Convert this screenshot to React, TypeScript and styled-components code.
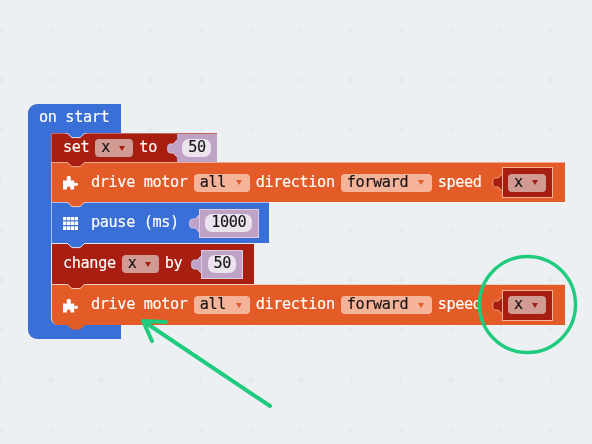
import React from "react";
import styled, { createGlobalStyle } from "styled-components";

const BLUE = "#3b6fd8";
const RED = "#a81e10";
const ORANGE = "#e35b26";
const LILAC = "#bfa3c6";
const GREEN = "#1fcb7e";

const Global = createGlobalStyle`
  html, body { margin: 0; padding: 0; background: #ecf0f2; }
  #root { width: 592px; height: 444px; overflow: hidden; }
`;

const Page = styled.div`
  position: relative;
  width: 592px;
  height: 444px;
  overflow: hidden;
  box-sizing: border-box;
  padding: 104px 0 0 28px;
  background: #ecf0f2;
  font-family: "DejaVu Sans Mono", "Liberation Mono", monospace;
  font-size: 15.2px;
  letter-spacing: -0.36px;
  -webkit-text-stroke: 0.15px currentColor;
  filter: blur(0.3px);
`;

const Layer = styled.svg`
  position: absolute;
  left: 0;
  top: 0;
  pointer-events: none;
`;

const GridLayer = styled(Layer)`
  z-index: 0;
`;

const MarkLayer = styled(Layer)`
  z-index: 5;
`;

const Loop = styled.section`
  position: relative;
  z-index: 1;
  display: flex;
  flex-direction: column;
  width: max-content;
`;

const LoopHead = styled.div`
  box-sizing: border-box;
  width: 93px;
  height: 29px;
  padding: 0 0 2px 11px;
  display: flex;
  align-items: center;
  background: ${BLUE};
  border-radius: 9px 0 0 0;
  color: #fff;
`;

const LoopBody = styled.div`
  display: flex;
`;

const LoopArm = styled.div`
  width: 23px;
  background: ${BLUE};
`;

const LoopFoot = styled.div`
  width: 93px;
  height: 14px;
  background: ${BLUE};
  border-radius: 0 0 0 9px;
`;

const Stack = styled.div`
  display: flex;
  flex-direction: column;
  align-items: flex-start;
`;

const CornerBacking = styled.div`
  background: ${BLUE};
`;

const Block = styled.div<{ $bg: string; $h: number; $edge: string; $pr?: number; $round?: boolean }>`
  position: relative;
  box-sizing: border-box;
  height: ${(p) => p.$h}px;
  padding: 0 ${(p) => p.$pr ?? 12}px 0 11px;
  display: flex;
  align-items: center;
  gap: 6px;
  background: ${(p) => p.$bg};
  border-top: 1px solid ${(p) => p.$edge};
  border-left: 1px solid ${(p) => p.$edge};
  border-radius: ${(p) => (p.$round ? "0 0 0 7px" : "0")};
  color: #fff;
`;

const Notch = styled.svg<{ $below?: boolean }>`
  position: absolute;
  left: 13px;
  top: ${(p) => (p.$below ? "100%" : "-1px")};
  z-index: 2;
`;

const Label = styled.span`
  white-space: pre;
  line-height: 18px;
  padding-bottom: 2px;
`;

const IconSlot = styled.svg`
  flex: none;
  margin-right: 7px;
`;

const Dropdown = styled.span<{ $w: number; $bg: string; $arrow: string }>`
  box-sizing: border-box;
  width: ${(p) => p.$w}px;
  height: 18px;
  padding: 0 8px 2px 6px;
  display: flex;
  align-items: center;
  justify-content: space-between;
  background: ${(p) => p.$bg};
  border-radius: 4px;
  color: #151515;
  --arrow: ${(p) => p.$arrow};
`;

const Caret = styled.i`
  width: 0;
  height: 0;
  margin-top: 2px;
  border-left: 3px solid transparent;
  border-right: 3px solid transparent;
  border-top: 5px solid var(--arrow);
`;

const Value = styled.span<{ $left: number }>`
  display: flex;
  align-items: center;
  margin-left: ${(p) => p.$left}px;
`;

const Tab = styled.svg`
  flex: none;
  display: block;
`;

const ValueBody = styled.span<{ $w: number; $h: number; $bg: string; $line?: string }>`
  box-sizing: border-box;
  width: ${(p) => p.$w}px;
  height: ${(p) => p.$h}px;
  display: flex;
  align-items: center;
  justify-content: center;
  background: ${(p) => p.$bg};
  border: ${(p) => (p.$line ? `1px solid ${p.$line}` : "none")};
`;

const NumberPill = styled.span<{ $w: number }>`
  box-sizing: border-box;
  width: ${(p) => p.$w}px;
  height: 18px;
  padding-bottom: 2px;
  display: flex;
  align-items: center;
  justify-content: center;
  background: #ebe3ee;
  border-radius: 7px;
  color: #151515;
`;

const Puzzle = () => (
  <IconSlot width="15" height="15" viewBox="0 0 15 15">
    <path
      fill="#fff"
      d="M0 5.5H4V4.2C3.2 3.6 3.4 1 5.8 1S8.4 3.6 7.6 4.2V5.5H11.2V8.2C12.2 7.4 15 7.4 15 9.2S12.2 11 11.2 10.2V14.5H7.4V13.4C8 12.4 7 11.4 5.7 11.4S3.4 12.4 4 13.4V14.5H0Z"
    />
  </IconSlot>
);

const GridIcon = () => (
  <IconSlot width="15" height="13" viewBox="0 0 15 13">
    <path
      fill="#fff"
      d="M0 0h3.3v3.3H0zM3.9 0h3.3v3.3H3.9zM7.8 0h3.3v3.3H7.8zM11.7 0H15v3.3h-3.3zM0 4.4h3.3v3.6H0zM3.9 4.4h3.3v3.6H3.9zM7.8 4.4h3.3v3.6H7.8zM11.7 4.4H15v3.6h-3.3zM0 9.2h3.3V13H0zM3.9 9.2h3.3V13H3.9zM7.8 9.2h3.3V13H7.8zM11.7 9.2H15V13h-3.3z"
    />
  </IconSlot>
);

const BlockNotch = ({ color, edge, below }: { color: string; edge?: string; below?: boolean }) => (
  <Notch $below={below} width="22" height="6" viewBox="0 0 22 6">
    <path
      d="M0 0L2 0L7 4.6H15L20 0L22 0"
      fill={color}
      stroke={edge ?? "none"}
      strokeWidth="1"
    />
  </Notch>
);

const PuzzleTab = ({ fill, line }: { fill: string; line: string }) => (
  <Tab width="10" height="17" viewBox="0 0 10 17">
    <path
      d="M10 .5C8 .5 8.2 4 5.5 4C2.5 4 .7 3.5 .7 8.5S2.5 13 5.5 13C8.2 13 8 16.5 10 16.5"
      fill={fill}
      stroke={line}
      strokeWidth="1"
    />
  </Tab>
);

const Field = ({ w, text, dark }: { w: number; text: string; dark?: boolean }) => (
  <Dropdown $w={w} $bg={dark ? "#d19b94" : "#f5b39a"} $arrow={dark ? RED : ORANGE}>
    {text}
    <Caret />
  </Dropdown>
);

const DriveRow = ({ above, edge, last }: { above: string; edge: string; last?: boolean }) => (
  <Block $bg={ORANGE} $h={last ? 41 : 40} $edge={edge} $round={last}>
    <BlockNotch color={above} edge={edge} />
    <Puzzle />
    <Label>drive motor</Label>
    <Field w={56} text="all" />
    <Label>direction</Label>
    <Field w={91} text="forward" />
    <Label>speed</Label>
    <Value $left={4}>
      <PuzzleTab fill={RED} line="#f2a88c" />
      <ValueBody $w={51} $h={31} $bg={RED} $line="#f5b39a">
        <Field w={38} text="x" dark />
      </ValueBody>
    </Value>
    {last && <BlockNotch color={ORANGE} below />}
  </Block>
);

const Marks = () => (
  <MarkLayer width="592" height="444" viewBox="0 0 592 444">
    <circle cx="527.5" cy="304.5" r="48" fill="none" stroke={GREEN} strokeWidth="3.4" />
    <path
      d="M270 406L143 321M143 321L166 322M143 321L152 341"
      fill="none"
      stroke={GREEN}
      strokeWidth="4"
      strokeLinecap="round"
    />
  </MarkLayer>
);

const Dots = () => (
  <GridLayer width="592" height="444" viewBox="0 0 592 444">
    <defs>
      <pattern id="plus" width="50" height="50" patternUnits="userSpaceOnUse" x="1" y="30">
        <path d="M-4 0H4M46 0H54M0 -4V4M0 46V54M50 -4V4M50 46V54M-4 50H4M46 50H54" stroke="#e2e6e9" strokeWidth="1" fill="none" />
      </pattern>
    </defs>
    <rect width="592" height="444" fill="url(#plus)" />
  </GridLayer>
);

export default function App() {
  return (
    <>
      <Global />
      <Page>
        <Dots />
        <Loop>
          <LoopHead>
            <Label>on start</Label>
          </LoopHead>
          <LoopBody>
            <LoopArm />
            <Stack>
              <Block $bg={RED} $h={29} $edge="#c9665c" $pr={0}>
                <BlockNotch color={BLUE} edge="#dfe6f5" />
                <Label>set</Label>
                <Field w={38} text="x" dark />
                <Label>to</Label>
                <Value $left={4}>
                  <PuzzleTab fill={LILAC} line="#d9c8de" />
                  <ValueBody $w={40} $h={28} $bg={LILAC}>
                    <NumberPill $w={29}>50</NumberPill>
                  </ValueBody>
                </Value>
              </Block>
              <DriveRow above={RED} edge="#f2a88c" />
              <Block $bg={BLUE} $h={41} $edge="#a9c0ee" $pr={10}>
                <BlockNotch color={ORANGE} edge="#f2d0c0" />
                <GridIcon />
                <Label>pause (ms)</Label>
                <Value $left={4}>
                  <PuzzleTab fill={LILAC} line="#d9c8de" />
                  <ValueBody $w={60} $h={29} $bg={LILAC} $line="#dccde3">
                    <NumberPill $w={47}>1000</NumberPill>
                  </ValueBody>
                </Value>
              </Block>
              <Block $bg={RED} $h={41} $edge="#dfe6f5" $pr={11}>
                <BlockNotch color={BLUE} edge="#dfe6f5" />
                <Label>change</Label>
                <Field w={37} text="x" dark />
                <Label>by</Label>
                <Value $left={3}>
                  <PuzzleTab fill={LILAC} line="#d9c8de" />
                  <ValueBody $w={42} $h={29} $bg={LILAC} $line="#dccde3">
                    <NumberPill $w={28}>50</NumberPill>
                  </ValueBody>
                </Value>
              </Block>
              <CornerBacking>
                <DriveRow above={RED} edge="#f2d0c0" last />
              </CornerBacking>
            </Stack>
          </LoopBody>
          <LoopFoot />
        </Loop>
        <Marks />
      </Page>
    </>
  );
}
